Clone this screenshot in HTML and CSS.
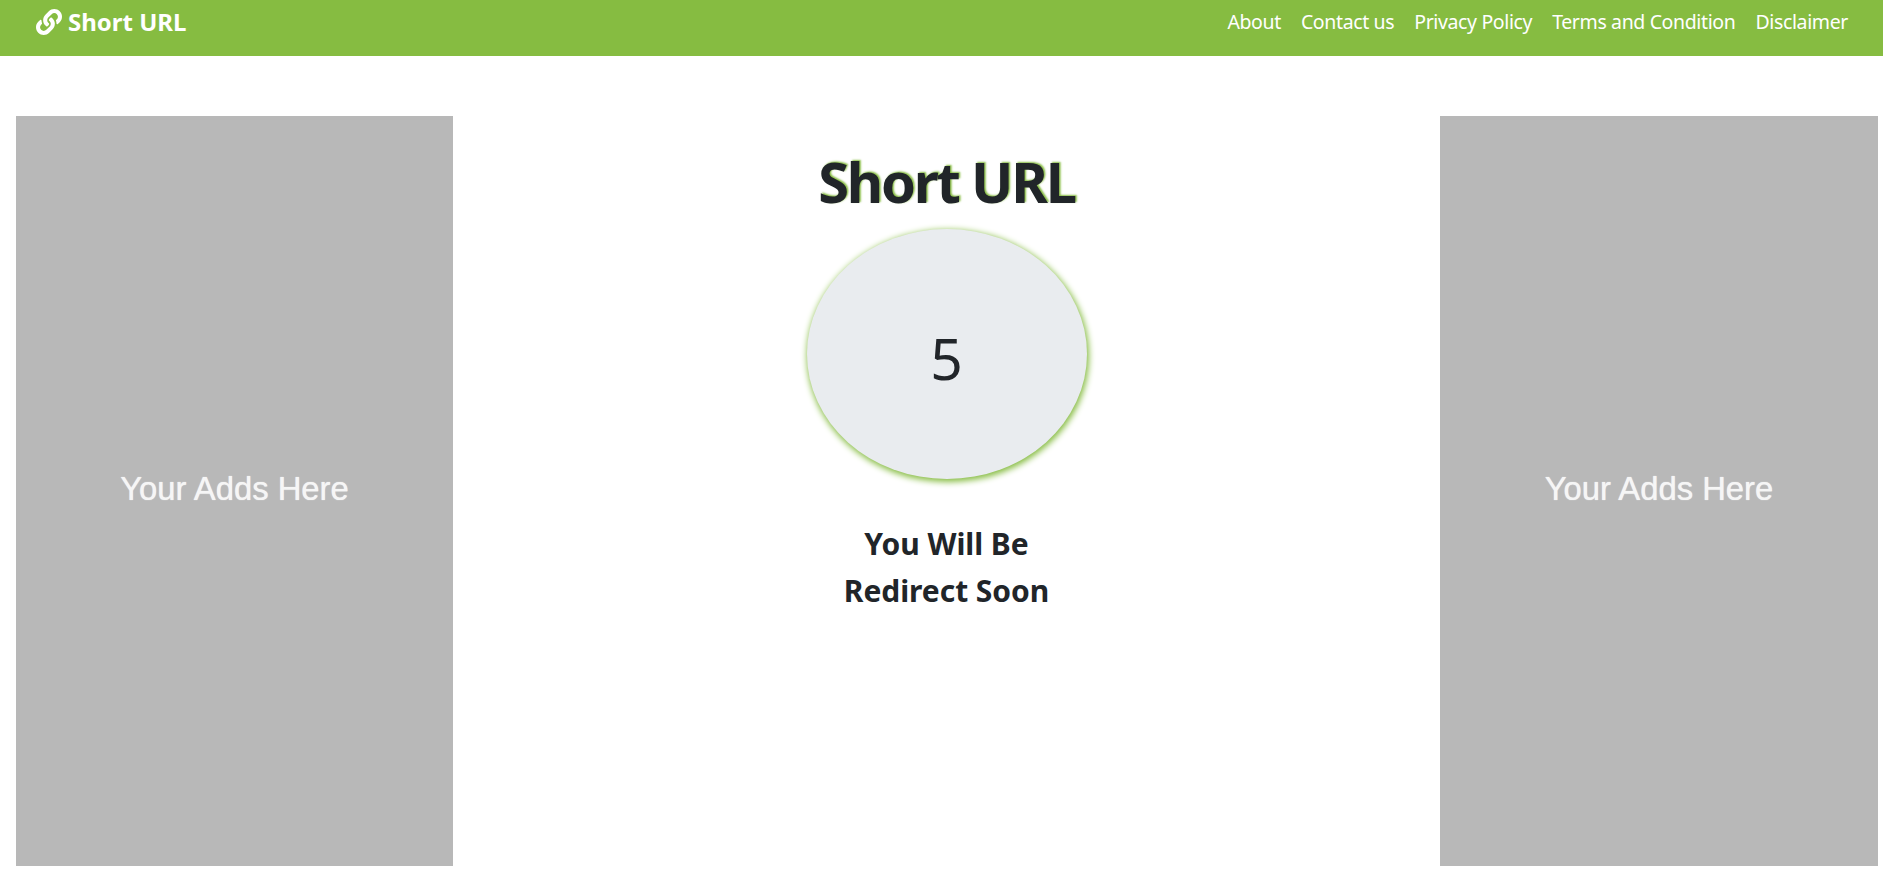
FILE: index.html
```html
<!DOCTYPE html>
<html lang="en">
<head>
<meta charset="utf-8">
<title>Short URL</title>
<link rel="stylesheet" href="styles.css">
</head>
<body>
<nav class="navbar">
  <a class="brand" href="#">
    <svg class="brand-icon" viewBox="0 0 512 512" aria-hidden="true"><path d="M326.612 185.391c59.747 59.809 58.927 155.698.36 214.59-.11.12-.24.25-.36.37l-67.2 67.2c-59.27 59.27-155.699 59.262-214.96 0-59.27-59.26-59.27-155.7 0-214.96l37.106-37.106c9.84-9.84 26.786-3.3 27.294 10.606.648 17.722 3.826 35.527 9.69 52.721 1.986 5.822.567 12.262-3.783 16.612l-13.087 13.087c-28.026 28.026-28.905 73.66-1.155 101.96 28.024 28.579 74.086 28.749 102.325.51l67.2-67.19c28.191-28.191 28.073-73.757 0-101.83-3.701-3.694-7.429-6.564-10.341-8.569a16.037 16.037 0 0 1-6.947-12.606c-.396-10.567 3.348-21.456 11.698-29.806l21.054-21.055c5.521-5.521 14.182-6.199 20.584-1.731a152.482 152.482 0 0 1 20.522 17.197zM467.547 44.449c-59.261-59.262-155.69-59.27-214.96 0l-67.2 67.2c-.12.12-.25.25-.36.37-58.566 58.892-59.387 154.781.36 214.59a152.454 152.454 0 0 0 20.521 17.196c6.402 4.468 15.064 3.789 20.584-1.731l21.054-21.055c8.35-8.35 12.094-19.239 11.698-29.806a16.037 16.037 0 0 0-6.947-12.606c-2.912-2.005-6.64-4.875-10.341-8.569-28.073-28.073-28.191-73.639 0-101.83l67.2-67.19c28.239-28.239 74.3-28.069 102.325.51 27.75 28.3 26.872 73.934-1.155 101.96l-13.087 13.087c-4.35 4.35-5.769 10.79-3.783 16.612 5.864 17.194 9.042 34.999 9.69 52.721.509 13.906 17.454 20.446 27.294 10.606l37.106-37.106c59.271-59.259 59.271-155.699.001-214.959z"/></svg>
    <span>Short URL</span>
  </a>
  <ul class="nav-links">
    <li><a href="#">About</a></li>
    <li><a href="#">Contact us</a></li>
    <li><a href="#">Privacy Policy</a></li>
    <li><a href="#">Terms and Condition</a></li>
    <li><a href="#">Disclaimer</a></li>
  </ul>
</nav>
<main class="layout">
  <aside class="ad"><span>Your Adds Here</span></aside>
  <section class="center">
    <h1 class="title">Short URL</h1>
    <div class="counter"><span class="count">5</span></div>
    <h3 class="message">You Will Be<br>Redirect Soon</h3>
  </section>
  <aside class="ad ad-right"><span>Your Adds Here</span></aside>
</main>
</body>
</html>
```
FILE: styles.css
```css
* { box-sizing: border-box; }
html, body { margin: 0; height: 100%; }
body {
  background: #fff;
  color: #212529;
  font-family: "Noto Sans", "Open Sans", sans-serif;
  overflow: hidden;
}
a { color: inherit; text-decoration: none; }
.navbar {
  height: 56px;
  background: #86bc41;
  color: #fff;
  display: flex;
  align-items: flex-start;
  justify-content: space-between;
  padding: 6px 35px 0 36px;
}
.brand {
  display: flex;
  align-items: center;
  gap: 6px;
  font-size: 24px;
  font-weight: 700;
  letter-spacing: 0;
  line-height: 32px;
}
.brand-icon { width: 26px; height: 26px; fill: #fff; }
.nav-links {
  display: flex;
  gap: 20px;
  list-style: none;
  margin: 0;
  padding: 0;
  font-size: 19.5px;
  line-height: 32px;
  letter-spacing: -0.37px;
}
.layout {
  display: flex;
  justify-content: space-between;
  padding: 60px 5px 0 16px;
}
.ad {
  width: 437px;
  height: 750px;
  background: #b8b8b8;
  color: #f6f6f6;
  font-family: "Liberation Sans", Arial, sans-serif;
  font-size: 32.8px;
  text-shadow: 0 0 1px #f6f6f6;
  display: flex;
  align-items: center;
  justify-content: center;
  padding-bottom: 5px;
}
.ad-right { width: 438px; }
.center {
  width: 280px;
  display: flex;
  flex-direction: column;
  align-items: center;
}
.title {
  margin: 32px 0 0;
  font-size: 56px;
  line-height: 1.2;
  font-weight: 700;
  white-space: nowrap;
  text-shadow: 1.5px -1.5px 2px #86bc41;
  letter-spacing: -2.2px;
}
.counter {
  width: 280px;
  height: 250px;
  margin-top: 14px;
  border-radius: 50%;
  background: #e9ecef;
  box-shadow: 1px 2px 6px 1px #86bc41;
  display: flex;
  align-items: center;
  justify-content: center;
  font-size: 57px;
  font-weight: 400;
}
.count { padding-top: 8px; }
.message {
  margin: 41px 0 0;
  font-size: 30px;
  line-height: 47px;
  font-weight: 700;
  text-align: center;
  white-space: nowrap;
  letter-spacing: -0.05px;
}
```
